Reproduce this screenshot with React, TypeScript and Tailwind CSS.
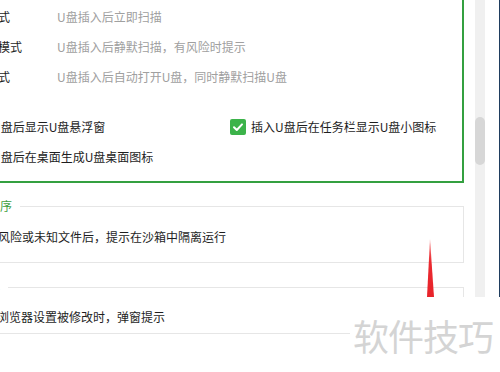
import React from "react";

function Box({ checked }: { checked?: boolean }) {
  if (checked) {
    return (
      <span className="flex h-[16px] w-[16px] shrink-0 items-center justify-center rounded-[2px] bg-[#3cb34a]">
        <svg width="12" height="12" viewBox="0 0 12 12">
          <path d="M2 6.2 L4.8 9 L10 3.4" fill="none" stroke="#fff" strokeWidth="2" strokeLinecap="round" strokeLinejoin="round" />
        </svg>
      </span>
    );
  }
  return <span className="h-[16px] w-[16px] shrink-0 rounded-[2px] border border-[#bdbdbd] bg-white" />;
}

const modes = [
  ["立即模式", "U盘插入后立即扫描"],
  ["低打扰模式", "U盘插入后静默扫描，有风险时提示"],
  ["自动模式", "U盘插入后自动打开U盘，同时静默扫描U盘"],
];

export default function App() {
  return (
    <div className="relative h-[372px] w-[500px] overflow-hidden bg-white text-[12px] text-[#1e1e1e] font-['Noto_Sans_CJK_SC','Noto_Sans',sans-serif]">
      <div className="flex items-start">
        <div className="-ml-[60px] w-[535px] shrink-0">
          {/* highlighted options box */}
          <div className="h-[183px] w-[524px] border-r-2 border-b-2 border-[#34a040] pt-[2px]">
            {modes.map(([label, desc]) => (
              <div key={label} className="flex h-[30px] items-center pl-[22px]">
                <span className="w-[95px] shrink-0">{label}</span>
                <span className="text-[#a0a0a0]">{desc}</span>
              </div>
            ))}
            <div className="mt-[20px] flex h-[30px] items-center pl-[8px]">
              <div className="flex w-[282px] shrink-0 items-center gap-[4px]">
                <Box checked />
                <span>插入U盘后显示U盘悬浮窗</span>
              </div>
              <div className="flex items-center gap-[5px]">
                <Box checked />
                <span>插入U盘后在任务栏显示U盘小图标</span>
              </div>
            </div>
            <div className="flex h-[30px] items-center gap-[4px] pl-[8px]">
              <Box checked />
              <span>插入U盘后在桌面生成U盘桌面图标</span>
            </div>
          </div>

          <fieldset className="mt-[15px] w-[524px] border border-[#e6e6e6]">
            <legend className="ml-[15px] px-[8px] leading-[16px] text-[#3f9f3f]">可疑程序</legend>
            <div className="pt-[8px] pb-[10px]">
              <div className="flex h-[30px] items-center pl-[33px]">发现风险或未知文件后，提示在沙箱中隔离运行</div>
            </div>
          </fieldset>

          <fieldset className="mt-[16px] w-[524px] border border-[#e6e6e6]">
            <legend className="ml-[15px] px-[8px] leading-[16px] text-[#3f9f3f]">浏览器</legend>
            <div className="pt-[7px] pb-[1px]">
              <div className="flex h-[30px] items-center pl-[32px]">发现浏览器设置被修改时，弹窗提示</div>
            </div>
          </fieldset>
        </div>

        {/* scrollbar */}
        <div className="h-[297px] w-[10px] shrink-0 bg-[#f0f0f0] pt-[117px]">
          <div className="h-[48px] w-[10px] rounded-full bg-[#d7d7d7]" />
        </div>
        <div className="h-[297px] w-[14px] shrink-0" />
        <div className="h-[297px] w-[1px] shrink-0 bg-[#1f3d5e]" />
      </div>

      {/* red annotation arrow */}
      <svg className="pointer-events-none absolute left-0 top-0" width="500" height="372" viewBox="0 0 500 372">
        <defs>
          <linearGradient id="ar" x1="0" y1="0" x2="0" y2="1">
            <stop offset="0" stopColor="#f47a7c" />
            <stop offset="0.4" stopColor="#ea2a30" />
            <stop offset="1" stopColor="#e8232a" />
          </linearGradient>
        </defs>
        <polygon points="430,239 427,297 434,297" fill="url(#ar)" />
      </svg>

      {/* watermark */}
      <div className="absolute left-[350px] top-[297px] right-0 bottom-0 flex items-center bg-white pl-[3px]">
        <span className="text-[36px] leading-none tracking-[-1px] text-[#d4d4d4]">软件技巧</span>
      </div>
    </div>
  );
}
